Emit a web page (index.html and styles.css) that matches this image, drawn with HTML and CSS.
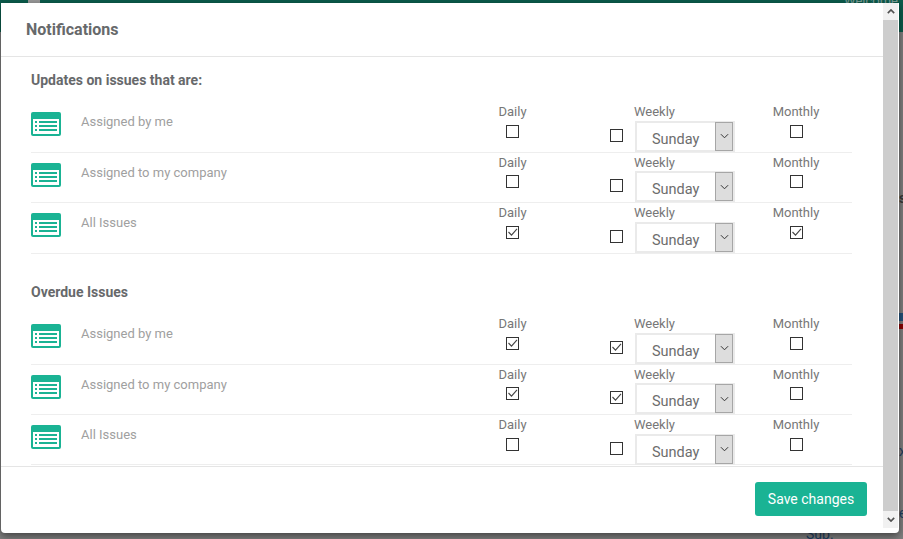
FILE: index.html
```html
<!DOCTYPE html>
<html lang="en">
<head>
<meta charset="utf-8">
<title>Notifications</title>
<link rel="stylesheet" href="styles.css">
</head>
<body>
<div class="page">
  <div class="topbar"><span class="menu-stub"></span><span class="welcome">Welcome</span></div>
  <span class="frag frag-s">s</span>
  <span class="frag frag-blue"></span>
  <span class="frag frag-red"></span>
  <span class="frag frag-x">x</span>
  <span class="frag frag-e">e</span>
  <span class="frag frag-sup">Sup.</span>
</div>
<div class="modal">
  <div class="modal-main">
    <header class="modal-header"><h4>Notifications</h4></header>
    <div class="modal-body">
      <h5 class="section-title">Updates on issues that are:</h5>
      <div class="row">
        <svg class="list-icon" viewBox="0 0 30 24"><rect width="30" height="24" rx="2" fill="#1ab394"/><rect x="2" y="7" width="26" height="15" fill="#fff"/><path d="M4 9h2v2H4zM4 13h2v2H4zM4 17h2v2H4zM8 9h18v2H8zM8 13h18v2H8zM8 17h18v2H8z" fill="#1ab394"/></svg>
        <span class="row-label">Assigned by me</span>
        <div class="col col-daily"><span class="col-title">Daily</span><input type="checkbox" class="cb"></div>
        <div class="col-weekly"><input type="checkbox" class="cb cb-weekly"><span class="col-title">Weekly</span><div class="sel"><span class="sel-value">Sunday</span><span class="sel-arrow"><svg viewBox="0 0 10 6"><path d="M1 1l4 4 4-4" fill="none" stroke="#333" stroke-width="1.1"/></svg></span></div></div>
        <div class="col col-monthly"><span class="col-title">Monthly</span><input type="checkbox" class="cb"></div>
      </div>
      <div class="row">
        <svg class="list-icon" viewBox="0 0 30 24"><rect width="30" height="24" rx="2" fill="#1ab394"/><rect x="2" y="7" width="26" height="15" fill="#fff"/><path d="M4 9h2v2H4zM4 13h2v2H4zM4 17h2v2H4zM8 9h18v2H8zM8 13h18v2H8zM8 17h18v2H8z" fill="#1ab394"/></svg>
        <span class="row-label">Assigned to my company</span>
        <div class="col col-daily"><span class="col-title">Daily</span><input type="checkbox" class="cb"></div>
        <div class="col-weekly"><input type="checkbox" class="cb cb-weekly"><span class="col-title">Weekly</span><div class="sel"><span class="sel-value">Sunday</span><span class="sel-arrow"><svg viewBox="0 0 10 6"><path d="M1 1l4 4 4-4" fill="none" stroke="#333" stroke-width="1.1"/></svg></span></div></div>
        <div class="col col-monthly"><span class="col-title">Monthly</span><input type="checkbox" class="cb"></div>
      </div>
      <div class="row">
        <svg class="list-icon" viewBox="0 0 30 24"><rect width="30" height="24" rx="2" fill="#1ab394"/><rect x="2" y="7" width="26" height="15" fill="#fff"/><path d="M4 9h2v2H4zM4 13h2v2H4zM4 17h2v2H4zM8 9h18v2H8zM8 13h18v2H8zM8 17h18v2H8z" fill="#1ab394"/></svg>
        <span class="row-label">All Issues</span>
        <div class="col col-daily"><span class="col-title">Daily</span><input type="checkbox" class="cb" checked></div>
        <div class="col-weekly"><input type="checkbox" class="cb cb-weekly"><span class="col-title">Weekly</span><div class="sel"><span class="sel-value">Sunday</span><span class="sel-arrow"><svg viewBox="0 0 10 6"><path d="M1 1l4 4 4-4" fill="none" stroke="#333" stroke-width="1.1"/></svg></span></div></div>
        <div class="col col-monthly"><span class="col-title">Monthly</span><input type="checkbox" class="cb" checked></div>
      </div>
      <h5 class="section-title section-second">Overdue Issues</h5>
      <div class="row">
        <svg class="list-icon" viewBox="0 0 30 24"><rect width="30" height="24" rx="2" fill="#1ab394"/><rect x="2" y="7" width="26" height="15" fill="#fff"/><path d="M4 9h2v2H4zM4 13h2v2H4zM4 17h2v2H4zM8 9h18v2H8zM8 13h18v2H8zM8 17h18v2H8z" fill="#1ab394"/></svg>
        <span class="row-label">Assigned by me</span>
        <div class="col col-daily"><span class="col-title">Daily</span><input type="checkbox" class="cb" checked></div>
        <div class="col-weekly"><input type="checkbox" class="cb cb-weekly" checked><span class="col-title">Weekly</span><div class="sel"><span class="sel-value">Sunday</span><span class="sel-arrow"><svg viewBox="0 0 10 6"><path d="M1 1l4 4 4-4" fill="none" stroke="#333" stroke-width="1.1"/></svg></span></div></div>
        <div class="col col-monthly"><span class="col-title">Monthly</span><input type="checkbox" class="cb"></div>
      </div>
      <div class="row">
        <svg class="list-icon" viewBox="0 0 30 24"><rect width="30" height="24" rx="2" fill="#1ab394"/><rect x="2" y="7" width="26" height="15" fill="#fff"/><path d="M4 9h2v2H4zM4 13h2v2H4zM4 17h2v2H4zM8 9h18v2H8zM8 13h18v2H8zM8 17h18v2H8z" fill="#1ab394"/></svg>
        <span class="row-label">Assigned to my company</span>
        <div class="col col-daily"><span class="col-title">Daily</span><input type="checkbox" class="cb" checked></div>
        <div class="col-weekly"><input type="checkbox" class="cb cb-weekly" checked><span class="col-title">Weekly</span><div class="sel"><span class="sel-value">Sunday</span><span class="sel-arrow"><svg viewBox="0 0 10 6"><path d="M1 1l4 4 4-4" fill="none" stroke="#333" stroke-width="1.1"/></svg></span></div></div>
        <div class="col col-monthly"><span class="col-title">Monthly</span><input type="checkbox" class="cb"></div>
      </div>
      <div class="row">
        <svg class="list-icon" viewBox="0 0 30 24"><rect width="30" height="24" rx="2" fill="#1ab394"/><rect x="2" y="7" width="26" height="15" fill="#fff"/><path d="M4 9h2v2H4zM4 13h2v2H4zM4 17h2v2H4zM8 9h18v2H8zM8 13h18v2H8zM8 17h18v2H8z" fill="#1ab394"/></svg>
        <span class="row-label">All Issues</span>
        <div class="col col-daily"><span class="col-title">Daily</span><input type="checkbox" class="cb"></div>
        <div class="col-weekly"><input type="checkbox" class="cb cb-weekly"><span class="col-title">Weekly</span><div class="sel"><span class="sel-value">Sunday</span><span class="sel-arrow"><svg viewBox="0 0 10 6"><path d="M1 1l4 4 4-4" fill="none" stroke="#333" stroke-width="1.1"/></svg></span></div></div>
        <div class="col col-monthly"><span class="col-title">Monthly</span><input type="checkbox" class="cb"></div>
      </div>
    </div>
    <footer class="modal-footer"><button class="save" type="button">Save changes</button></footer>
  </div>
  <div class="scrollbar">
    <span class="sb-btn"><svg viewBox="0 0 10 6"><path d="M1 5l4-4 4 4" fill="none" stroke="#505050" stroke-width="2"/></svg></span>
    <span class="sb-track"></span>
    <span class="sb-btn"><svg viewBox="0 0 10 6"><path d="M1 1l4 4 4-4" fill="none" stroke="#505050" stroke-width="2"/></svg></span>
  </div>
</div>
</body>
</html>
```
FILE: styles.css
```css
* { box-sizing: border-box; }
html, body { margin: 0; height: 100%; }
body { width: 903px; height: 539px; overflow: hidden; position: relative; background: #808080; font-family: Roboto, "Liberation Sans", sans-serif; font-size: 14px; }
.page { position: absolute; inset: 0; background: #808080; color: #333; }
.topbar { height: 32px; background: #0b5c4c; display: flex; justify-content: space-between; padding: 0 0 0 28px; }
.menu-stub { width: 12px; height: 3px; background: #9a9a9a; }
.welcome { color: #7f9f98; font-size: 13px; line-height: 1; margin-right: 5px; margin-top: -6px; }
.frag { position: absolute; }
.frag-s { left: 899px; top: 190px; color: #3a3a3a; font-weight: 700; }
.frag-blue { left: 899px; top: 313px; width: 4px; height: 8px; background: #23527c; }
.frag-red { left: 899px; top: 324px; width: 4px; height: 5px; background: #8b0000; }
.frag-x { left: 899px; top: 443px; color: #1f3f63; }
.frag-e { left: 899px; top: 505px; color: #1f3f63; }
.frag-sup { left: 806px; top: 526px; color: #1f3f63; }
.modal { position: absolute; left: 1px; top: 3px; width: 898px; height: 530px; background: #fff; border-radius: 0 0 4px 4px; display: flex; color: #676a6c; box-shadow: 0 3px 9px rgba(0, 0, 0, .5); }
.modal-main { width: 882px; display: flex; flex-direction: column; }
.modal-header { height: 54px; border-bottom: 1px solid #e5e5e5; padding: 17px 25px 0; flex: none; }
.modal-header h4 { margin: 0; font-size: 16px; line-height: 20px; font-weight: 700; color: #67696b; }
.modal-body { flex: none; height: 409px; padding: 13.4px 30px 0; }
.section-title { margin: 0; font-size: 14px; line-height: 20px; font-weight: 700; color: #67696b; }
.section-second { margin-top: 28.6px; }
.row { height: 50.4px; width: 821px; border-bottom: 1px solid #eee; display: grid; grid-template-columns: 30px 20px 401px 61px 60px 132px 31px 60px; align-items: start; }
.section-title + .row { margin-top: 12px; }
.list-icon { width: 30px; height: 24px; margin-top: 10px; grid-column: 1; }
.row-label { grid-column: 3; color: #a0a0a0; font-size: 13px; line-height: 18px; margin-top: 11px; }
.col { display: flex; flex-direction: column; align-items: center; }
.col-daily { grid-column: 4; }
.col-monthly { grid-column: 8; }
.col-title { color: #777; font-size: 13px; line-height: 17.6px; margin-top: 1px; }
.cb { appearance: none; -webkit-appearance: none; display: block; margin: 4px 0 0; width: 13px; height: 13px; border: 1px solid #333; background: #fff; border-radius: 0; }
.cb:checked { background: #fff url("data:image/svg+xml,%3Csvg xmlns='http://www.w3.org/2000/svg' viewBox='0 0 11 11'%3E%3Cpath d='M1.5 5l3 3.2L10 1.8' fill='none' stroke='%23444' stroke-width='1.1'/%3E%3C/svg%3E") center / 11px 11px no-repeat; }
.col-weekly { grid-column: 6; display: grid; grid-template-columns: 25px 100px; align-items: start; margin-left: 7px; }
.col-weekly .col-title { grid-column: 2; grid-row: 1; margin-left: -1px; }
.cb-weekly { grid-column: 1; grid-row: 2; margin: 8px 0 0 0; }
.sel { grid-column: 2; grid-row: 2; height: 31px; border: 2px solid #eaeaea; display: flex; }
.sel-value { flex: 1; color: #6d6d6d; font-size: 14.5px; line-height: 30px; padding: 2px 0 0 15px; }
.sel-arrow { width: 18px; margin: -1px 0 -1px 0; background: #ddd; border: 1px solid #a6a6a6; display: flex; align-items: center; justify-content: center; }
.sel-arrow svg { width: 9px; height: 6px; }
.modal-footer { flex: 1; border-top: 1px solid #e5e5e5; display: flex; justify-content: flex-end; padding: 15px 16px 0 0; }
.save { width: 112px; height: 34px; border: 0; border-radius: 3px; background: #1ab394; color: #fff; font: 14px Roboto, sans-serif; }
.scrollbar { width: 15px; height: 525px; background: #cdcdcd; display: flex; flex-direction: column; }
.sb-btn { height: 17px; background: #f1f1f1; display: flex; align-items: center; justify-content: center; flex: none; }
.sb-btn svg { width: 8px; height: 5px; }
.sb-track { flex: 1; }
```
